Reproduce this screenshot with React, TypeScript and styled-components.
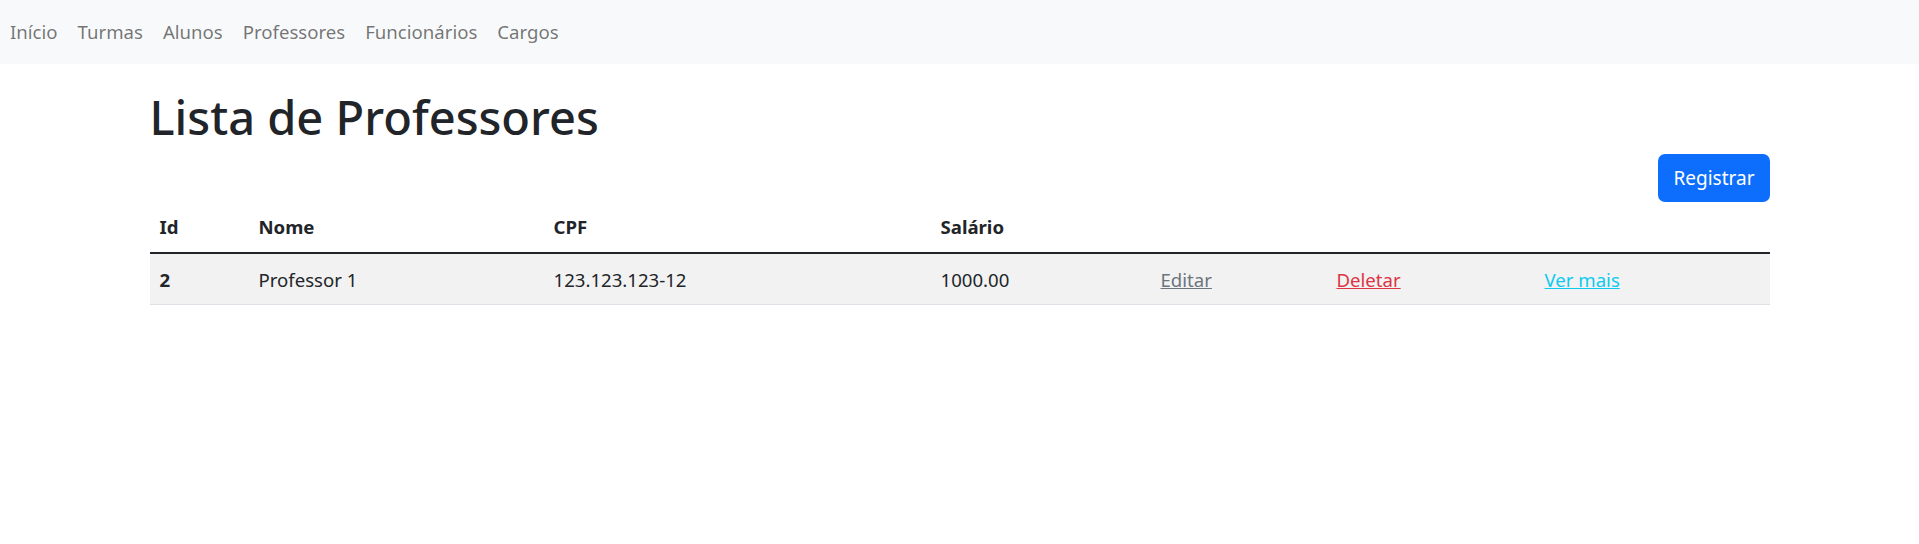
import React from 'react';
import styled, { createGlobalStyle } from 'styled-components';

const GlobalStyle = createGlobalStyle`
  body {
    margin: 0;
    background: #fff;
    color: #212529;
    font-family: "Noto Sans", "Open Sans", sans-serif;
    font-size: 20px;
    line-height: 1.5;
  }
`;

const NavBar = styled.nav`
  height: 64px;
  background-color: #f8f9fa;
  display: flex;
  align-items: center;
  padding-left: 0;
`;

const NavLink = styled.a`
  padding: 0 10px;
  color: rgba(0, 0, 0, 0.55);
  text-decoration: none;
  font-size: 18.6px;
  cursor: pointer;
`;

const Container = styled.main`
  max-width: 1620px;
  margin: 0 auto;
  padding: 23px 15px 0;
  display: flex;
  flex-direction: column;
`;

const Title = styled.h1`
  margin: 0 0 7px;
  font-size: 47px;
  font-weight: 500;
  line-height: 60px;
`;

const Actions = styled.div`
  display: flex;
  justify-content: flex-end;
`;

const Button = styled.button`
  height: 48px;
  padding: 0 15px;
  border: none;
  border-radius: 7px;
  background-color: #0d6efd;
  color: #fff;
  font-family: inherit;
  font-size: 19px;
  cursor: pointer;
`;

const Table = styled.table`
  width: 100%;
  border-collapse: collapse;
  table-layout: fixed;
`;

const Th = styled.th`
  text-align: left;
  font-weight: 700;
  padding: 10px;
  line-height: 30px;
  font-size: 18.6px;
  border-bottom: 2px solid #212529;
`;

const Row = styled.tr`
  background-color: #f2f2f2;
  border-bottom: 1px solid #dee2e6;
`;

const Td = styled.td<{ $bold?: boolean }>`
  padding: 11px 10px 9px;
  line-height: 30px;
  font-size: 18.6px;
  font-weight: ${(p) => (p.$bold ? 700 : 400)};
`;

const ActionLink = styled.a<{ $color: string }>`
  color: ${(p) => p.$color};
  text-decoration: underline;
  cursor: pointer;
`;

const widths = [99, 295, 387, 220, 176, 208, 235];

const App = () => {
  return (
    <>
      <GlobalStyle />
      <NavBar>
        <NavLink>Início</NavLink>
        <NavLink>Turmas</NavLink>
        <NavLink>Alunos</NavLink>
        <NavLink>Professores</NavLink>
        <NavLink>Funcionários</NavLink>
        <NavLink>Cargos</NavLink>
      </NavBar>
      <Container>
        <Title>Lista de Professores</Title>
        <Actions>
          <Button>Registrar</Button>
        </Actions>
        <Table>
          <colgroup>
            {widths.map((w, i) => (
              <col key={i} style={{ width: w }} />
            ))}
          </colgroup>
          <thead>
            <tr>
              <Th>Id</Th>
              <Th>Nome</Th>
              <Th>CPF</Th>
              <Th>Salário</Th>
              <Th />
              <Th />
              <Th />
            </tr>
          </thead>
          <tbody>
            <Row>
              <Td $bold>2</Td>
              <Td>Professor 1</Td>
              <Td>123.123.123-12</Td>
              <Td>1000.00</Td>
              <Td>
                <ActionLink $color="#6c757d">Editar</ActionLink>
              </Td>
              <Td>
                <ActionLink $color="#dc3545">Deletar</ActionLink>
              </Td>
              <Td>
                <ActionLink $color="#0dcaf0">Ver mais</ActionLink>
              </Td>
            </Row>
          </tbody>
        </Table>
      </Container>
    </>
  );
};

export default App;
